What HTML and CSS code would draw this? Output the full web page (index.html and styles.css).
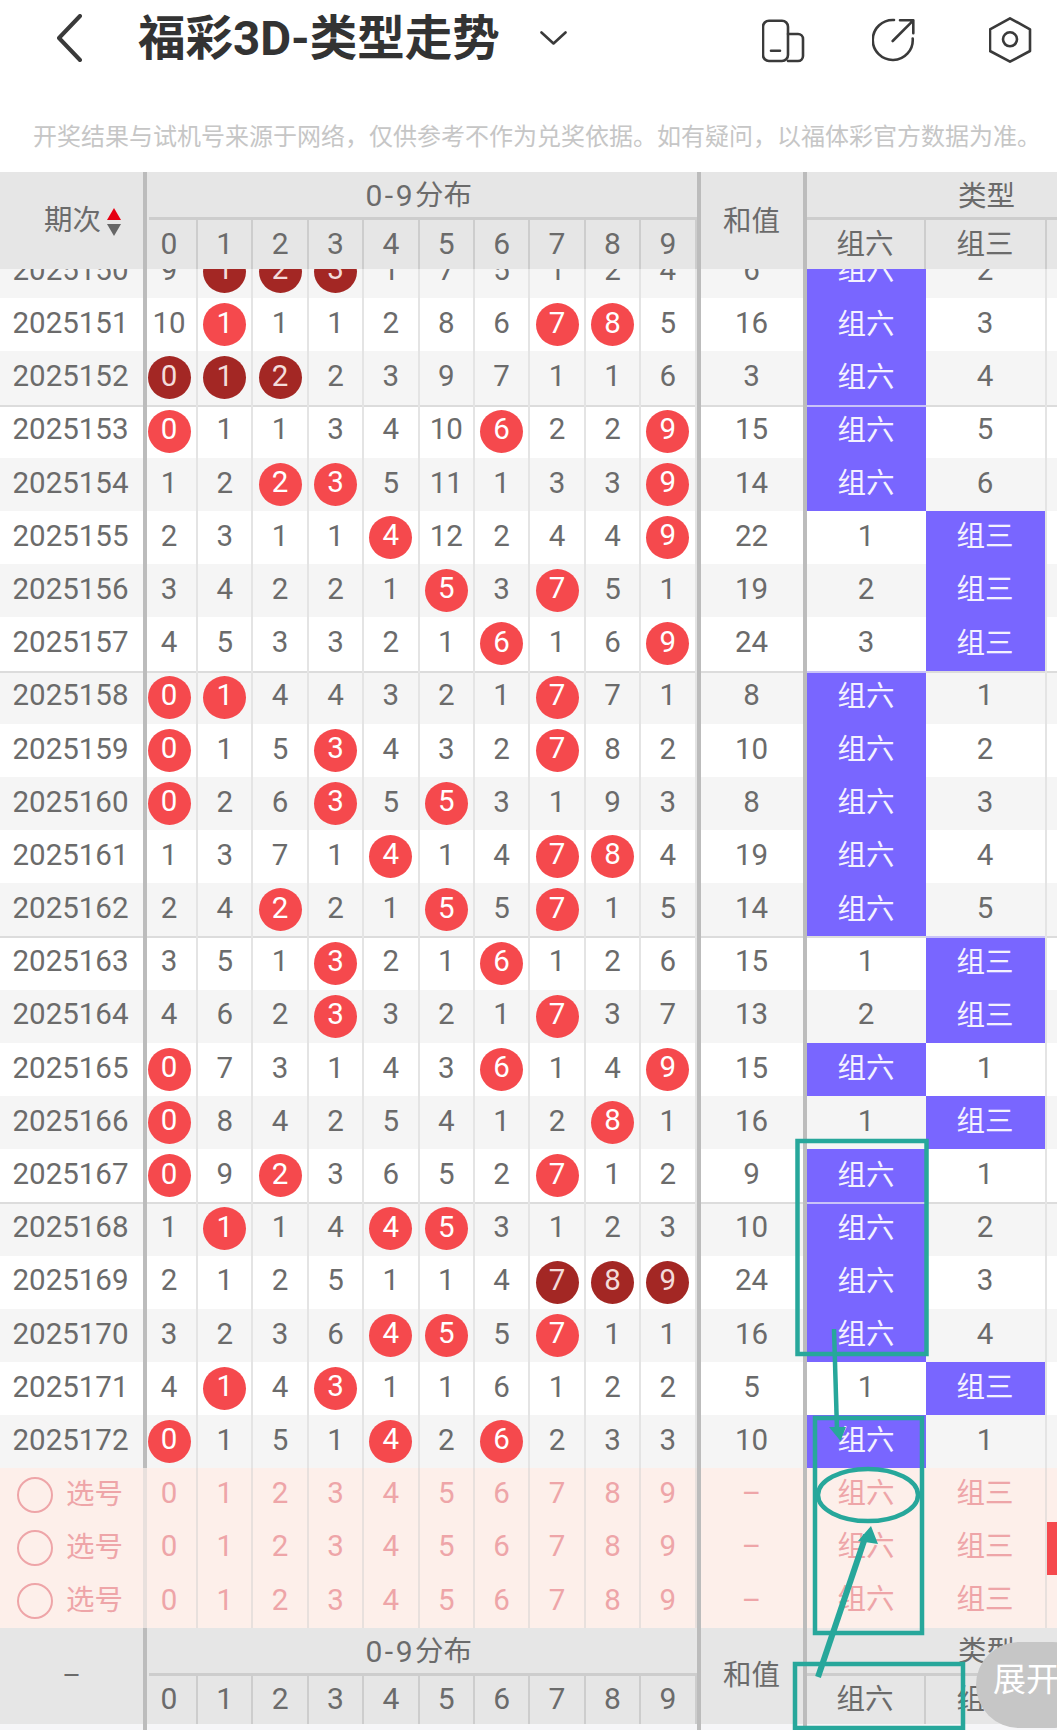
FILE: index.html
```html
<!DOCTYPE html>
<html lang="zh-CN">
<head>
    <meta charset="UTF-8">
    <meta name="viewport" content="width=device-width, initial-scale=1.0">
    <title>福彩3D-类型走势</title>
    <link rel="stylesheet" href="styles.css">
</head>
<body>
<div class="page">
    <div class="topbar">
        <svg class="back" width="26" height="48" viewBox="0 0 26 48"><path d="M24 2 3 24l21 22"/></svg>
        <div class="title">福彩3D-类型走势</div>
        <svg class="caret" width="27" height="14" viewBox="0 0 27 14"><path d="M1.5 1.5 13.5 12.5 25.5 1.5"/></svg>
        <div class="tools">
            <svg width="44" height="46" viewBox="0 0 44 46">
                <rect x="1" y="3.7" width="25" height="40.3" rx="6"/>
                <path d="M26 17h10a5 5 0 0 1 5 5v17a5 5 0 0 1-5 5H26M9 33.7h9"/>
            </svg>
            <svg width="44" height="46" viewBox="0 0 44 46">
                <path d="M22 3A20 20 0 1 0 40.7 21.5M20.7 24 41.3 3.3M28 3.3H41.3V16.3"/>
            </svg>
            <svg class="hex" width="44" height="46" viewBox="0 0 44 46">
                <path d="M21 1.3 41 12.3V34L21 44.7 1 34V12.3Z"/>
                <circle cx="21" cy="22.3" r="7"/>
            </svg>
        </div>
    </div>
    <div class="notice">开奖结果与试机号来源于网络，仅供参考不作为兑奖依据。如有疑问，以福体彩官方数据为准。</div>

    <div class="table">
        <div id="head" class="grid head"></div>
        <div id="rows" class="rows"></div>
        <div id="foot" class="grid head foot"></div>
        <div class="grid strip">
            <div class="strip-first"></div>
            <div class="strip-sum"></div>
        </div>
    </div>

    <div class="expand">展开</div>

    <!-- hand drawn marks on top of the screenshot -->
    <svg class="marks" width="1057" height="1730" viewBox="0 0 1057 1730">
        <rect x="797.5" y="1141" width="129" height="213"/>
        <rect x="815" y="1418" width="107" height="215"/>
        <rect x="795" y="1664" width="168" height="64"/>
        <ellipse cx="868" cy="1495" rx="50" ry="26"/>
        <path class="thin" d="M834 1329 837 1430"/>
        <path d="M818 1677 866 1535"/>
        <path class="head-fill" d="M840.5 1441 829 1427H846ZM871 1526 858 1541 878 1544Z"/>
    </svg>
</div>
<script src="script.js"></script>
</body>
</html>
```

FILE: styles.css
```css
body {
    margin: 0;
    background: #fff;
    font-family: Roboto, "Noto Sans CJK SC", sans-serif;
    font-size: 28.5px;
    line-height: 1;
    color: #6b6b6b;
}
.page {
    position: relative;
    width: 1057px;
    height: 1730px;
    overflow: hidden;
}

/* top bar */
.topbar {
    display: flex;
    align-items: center;
    height: 76px;
    padding-left: 56px;
}
.topbar svg {
    fill: none;
    stroke: #3a3a3a;
    stroke-width: 2.6;
    stroke-linecap: round;
    stroke-linejoin: round;
}
.topbar .back {
    stroke-width: 4;
}
.title {
    margin: 4px 0 0 56px;
    width: 361px;
    font-size: 47.5px;
    font-weight: 700;
    color: #333;
    white-space: nowrap;
}
.caret {
    margin-left: 41px;
}
.tools {
    display: flex;
    gap: 66px;
    align-self: flex-start;
    margin-left: auto;
    padding: 17px 24px 0 0;
}
.tools .hex {
    margin-left: 7px;
}
.notice {
    box-sizing: border-box;
    height: 96px;
    padding: 45px 0 0 33px;
    font-size: 24px;
    line-height: 32px;
    color: #c6c6c6;
    white-space: nowrap;
}

/* table */
.grid {
    display: grid;
    grid-template-columns: 147px 51px repeat(9, 55.4px) 110px 119px 121px 116px;
    width: 1163px;
    font-size: 29.5px;
}
.head {
    position: relative;
    z-index: 2;
    grid-template-rows: 48px 49px;
    background: #e6e6e6;
    font-size: 28.5px;
}
.head > div {
    display: flex;
    align-items: center;
    justify-content: center;
    box-sizing: border-box;
}
.foot {
    grid-template-rows: 48px 48px;
}
.h-period {
    grid-row: 1 / 3;
    border-right: 4px solid #bcbcbc;
    padding: 2px 0 0 22px;
    gap: 6px;
}
.foot .h-period {
    padding: 0;
}
.h-span {
    grid-column: 2 / 12;
    margin-left: 2px;
    padding: 3px 8px 0 0;
    border-bottom: 3px solid #cdcdcd;
}
.range {
    font-size: 30px;
    letter-spacing: 2.5px;
}
.h-sum {
    grid-column: 12;
    grid-row: 1 / 3;
    padding-top: 3px;
    border-left: 4px solid #bcbcbc;
    border-right: 4px solid #bcbcbc;
}
.foot .h-sum {
    padding-top: 0;
}
.h-type {
    grid-column: 13 / 16;
    grid-row: 1;
    padding: 5px 0 0 4px;
    border-bottom: 3px solid #cdcdcd;
}
.foot .h-type {
    padding-top: 3px;
}
.h-cell {
    padding-bottom: 2px;
    border-right: 2px solid #cdcdcd;
    font-size: 30px;
}
.h-cell.first {
    padding-right: 5px;
}
.h-cell.cjk {
    padding: 2px 0 0;
    font-size: 28.5px;
}
.foot .h-cell.cjk {
    padding: 0;
}
.first {
    padding-right: 5px;
}
.sort {
    display: flex;
    flex-direction: column;
    gap: 4px;
}
.sort i {
    width: 0;
    height: 0;
    border-left: 7.5px solid transparent;
    border-right: 7.5px solid transparent;
}
.sort .up {
    border-bottom: 12px solid #e60012;
}
.sort .down {
    border-top: 12px solid #666;
}

.rows {
    margin-top: -24px;
}
.row {
    height: 53.2px;
    background: #fff;
}
.row:nth-child(odd) {
    background: #f5f5f5;
}
.row > div {
    display: flex;
    align-items: center;
    justify-content: center;
    box-sizing: border-box;
    min-width: 0;
    padding-bottom: 2px;
    border-right: 2px solid #e4e4e4;
}
.row > .period {
    border-right: 4px solid #bcbcbc;
    padding-right: 2px;
}
.row > .sum {
    border-left: 4px solid #bcbcbc;
    border-right: 4px solid #bcbcbc;
}
.row > .type6 {
    border-right: 0;
}
.row.group > div {
    box-shadow: inset 0 2px 0 #dcdcdc;
}
.row > .on {
    padding-bottom: 0;
    background: #7966ff;
    color: #f4f2ff;
    font-size: 28.5px;
}
.row.group > .on {
    box-shadow: inset 0 2px 0 #c9c3f8;
}
.ball {
    display: flex;
    align-items: center;
    justify-content: center;
    box-sizing: border-box;
    width: 43px;
    height: 43px;
    margin-top: 2px;
    padding-bottom: 3px;
    border-radius: 50%;
    background: #f5494d;
    color: #fff;
}
.ball.dark {
    background: #a32724;
    color: #f3dcdb;
}

/* pick rows */
.row.pick {
    background: #fdefea;
    color: #eea5a8;
}
.row.pick > div {
    border-right-color: #e8e0dd;
}
.row.pick > .period {
    justify-content: flex-start;
    gap: 13px;
    padding: 0 0 0 17px;
    font-size: 28.5px;
}
.row.pick > .sum {
    border-right-color: #bcbcbc;
    border-left-color: #bcbcbc;
}
.row.pick > .cjk {
    font-size: 28.5px;
}
.radio {
    box-sizing: border-box;
    width: 36px;
    height: 36px;
    border: 2px solid #eea5a8;
    border-radius: 50%;
}
.row > .hit {
    background: #f5494d;
}

.strip {
    height: 10px;
    background: #f6f6f8;
}
.strip-first {
    border-right: 4px solid #bcbcbc;
}
.strip-sum {
    grid-column: 12;
    border-left: 4px solid #bcbcbc;
    border-right: 4px solid #bcbcbc;
}

/* overlays */
.expand {
    position: absolute;
    left: 976px;
    top: 1642px;
    width: 120px;
    height: 86px;
    padding-left: 17px;
    box-sizing: border-box;
    border-radius: 43px;
    background: #c6c6c6;
    color: #fff;
    font-size: 33px;
    line-height: 76px;
    white-space: nowrap;
    z-index: 3;
}
.marks {
    position: absolute;
    left: 0;
    top: 0;
    z-index: 4;
    fill: none;
    stroke: #27a79b;
    stroke-width: 4.5;
    pointer-events: none;
}
.marks path {
    stroke-width: 6;
}
.marks .thin {
    stroke-width: 4.5;
}
.marks .head-fill {
    fill: #27a79b;
    stroke: none;
}
```

FILE: script.js
```js
// period, ten columns (* hit, # hit in a run of three), sum, type
const data = [
    ['2025150', '9 1# 2# 3# 1 7 5 1 2 4', 6, 6, 2],
    ['2025151', '10 1* 1 1 2 8 6 7* 8* 5', 16, 6, 3],
    ['2025152', '0# 1# 2# 2 3 9 7 1 1 6', 3, 6, 4],
    ['2025153', '0* 1 1 3 4 10 6* 2 2 9*', 15, 6, 5],
    ['2025154', '1 2 2* 3* 5 11 1 3 3 9*', 14, 6, 6],
    ['2025155', '2 3 1 1 4* 12 2 4 4 9*', 22, 3, 1],
    ['2025156', '3 4 2 2 1 5* 3 7* 5 1', 19, 3, 2],
    ['2025157', '4 5 3 3 2 1 6* 1 6 9*', 24, 3, 3],
    ['2025158', '0* 1* 4 4 3 2 1 7* 7 1', 8, 6, 1],
    ['2025159', '0* 1 5 3* 4 3 2 7* 8 2', 10, 6, 2],
    ['2025160', '0* 2 6 3* 5 5* 3 1 9 3', 8, 6, 3],
    ['2025161', '1 3 7 1 4* 1 4 7* 8* 4', 19, 6, 4],
    ['2025162', '2 4 2* 2 1 5* 5 7* 1 5', 14, 6, 5],
    ['2025163', '3 5 1 3* 2 1 6* 1 2 6', 15, 3, 1],
    ['2025164', '4 6 2 3* 3 2 1 7* 3 7', 13, 3, 2],
    ['2025165', '0* 7 3 1 4 3 6* 1 4 9*', 15, 6, 1],
    ['2025166', '0* 8 4 2 5 4 1 2 8* 1', 16, 3, 1],
    ['2025167', '0* 9 2* 3 6 5 2 7* 1 2', 9, 6, 1],
    ['2025168', '1 1* 1 4 4* 5* 3 1 2 3', 10, 6, 2],
    ['2025169', '2 1 2 5 1 1 4 7# 8# 9#', 24, 6, 3],
    ['2025170', '3 2 3 6 4* 5* 5 7* 1 1', 16, 6, 4],
    ['2025171', '4 1* 4 3* 1 1 6 1 2 2', 5, 3, 1],
    ['2025172', '0* 1 5 1 4* 2 6* 2 3 3', 10, 6, 1]
];

const digits = [0, 1, 2, 3, 4, 5, 6, 7, 8, 9];

function headHtml(periodHtml) {
    let html = `<div class="h-period">${periodHtml}</div>`;
    html += '<div class="h-span"><span class="range">0-9</span>分布</div>';
    html += '<div class="h-sum">和值</div>';
    html += '<div class="h-type">类型</div>';
    digits.forEach(function (d) {
        html += `<div class="h-cell${d === 0 ? ' first' : ''}">${d}</div>`;
    });
    html += '<div class="h-cell cjk">组六</div><div class="h-cell cjk">组三</div><div class="h-cell"></div>';
    return html;
}

function numCell(value, i) {
    const first = i === 0 ? ' first' : '';
    const text = String(value);
    if (text.endsWith('*')) return `<div class="${first}"><span class="ball">${text[0]}</span></div>`;
    if (text.endsWith('#')) return `<div class="${first}"><span class="ball dark">${text[0]}</span></div>`;
    return `<div class="${first}">${text}</div>`;
}

function rowHtml(row, index) {
    const [period, nums, sum, kind, other] = row;
    // a line above every fifth row, from 2025153 on
    const group = (index + 2) % 5 === 0 ? ' group' : '';
    let html = `<div class="grid row${group}"><div class="period">${period}</div>`;
    nums.split(' ').forEach(function (v, i) {
        html += numCell(v, i);
    });
    html += `<div class="sum">${sum}</div>`;
    if (kind === 6) {
        html += `<div class="type6 on">组六</div><div>${other}</div>`;
    } else {
        html += `<div class="type6">${other}</div><div class="on">组三</div>`;
    }
    return html + '<div></div></div>';
}

function pickHtml(index) {
    let html = '<div class="grid row pick"><div class="period"><span class="radio"></span>选号</div>';
    digits.forEach(function (d, i) {
        html += numCell(d, i);
    });
    html += '<div class="sum">–</div><div class="type6 cjk">组六</div><div class="cjk">组三</div>';
    return html + `<div class="${index === 1 ? 'hit' : ''}"></div></div>`;
}

document.getElementById('head').innerHTML = headHtml(
    '期次<span class="sort"><i class="up"></i><i class="down"></i></span>'
);
document.getElementById('foot').innerHTML = headHtml('–');
document.getElementById('rows').innerHTML =
    data.map(rowHtml).join('') + [0, 1, 2].map(pickHtml).join('');
```
